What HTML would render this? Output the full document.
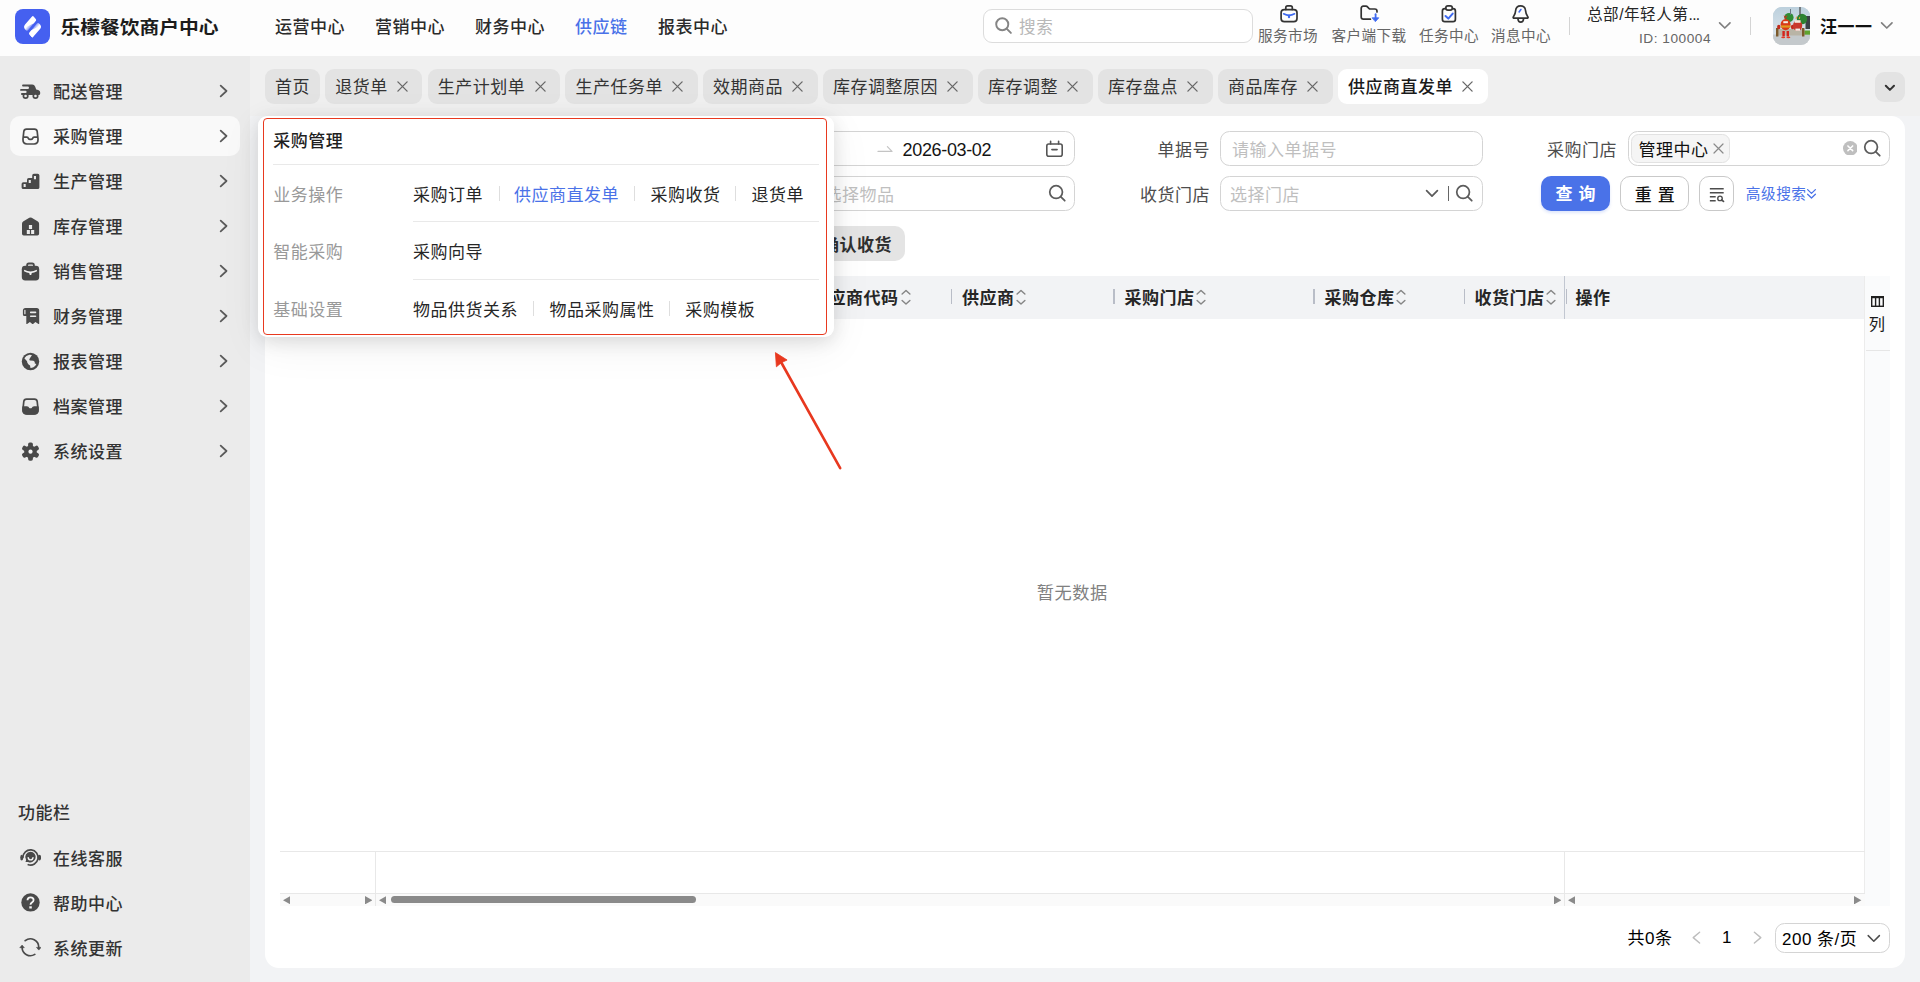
<!DOCTYPE html>
<html lang="zh-CN">
<head>
<meta charset="utf-8">
<title>乐檬餐饮商户中心</title>
<style>
*{box-sizing:border-box;margin:0;padding:0}
html,body{width:1920px;height:982px;overflow:hidden}
body{font-family:"Liberation Sans","Noto Sans CJK SC",sans-serif;font-size:17px;letter-spacing:.5px;color:#333;background:#f2f3f5;position:relative}
.abs{position:absolute}
svg{display:block}
/* header */
#hd{position:absolute;left:0;top:0;width:1920px;height:56px;background:#fdfdfd}
#logo{position:absolute;left:15px;top:8.7px;width:35px;height:35.3px;border-radius:8px;background:#4560f0}
#brand{position:absolute;left:60.4px;top:13px;font-size:19.8px;font-weight:700;color:#1c1c1c;letter-spacing:0;line-height:30px;white-space:nowrap;transform:scaleY(.9);transform-origin:0 50%}
.nav{position:absolute;top:14px;line-height:28px;font-size:17px;letter-spacing:.5px;font-weight:500;color:#2b2b2b;white-space:nowrap}
.nav.on{color:#4a72e8}
#search{position:absolute;left:983px;top:9px;width:270px;height:34px;border:1px solid #dcdcdc;border-radius:9px;background:#fff}
#search span{position:absolute;left:35px;top:4.6px;line-height:26px;font-size:16.6px;letter-spacing:.6px;color:#b8b8b8}
.hi{position:absolute;top:28px;font-size:14.6px;letter-spacing:.4px;line-height:16px;color:#666;white-space:nowrap;text-align:center}
.hico{position:absolute;top:4px}
.vdiv{position:absolute;width:1px;background:#d4d4d4}
#avatar{position:absolute;left:1773px;top:7px;width:37px;height:38px;border-radius:9px;overflow:hidden;background:linear-gradient(180deg,#cfd9de 0%,#c4d1d4 35%,#a9b39a 62%,#b9b8b0 78%,#cfcfcd 100%)}
/* sidebar */
#sb{position:absolute;left:0;top:56px;width:250px;height:926px;background:#ebebeb}
.mi{position:absolute;left:10px;width:230px;height:40px;border-radius:10px}
.mi.on{background:#f9f9f9}
.mi .ic{position:absolute}
.mi .tx{position:absolute;left:43px;top:8px;line-height:28px;font-size:17px;letter-spacing:.5px;font-weight:500;color:#333;white-space:nowrap}
.mi .ch{position:absolute;left:209px;top:13px}
/* tabs */
.tab{position:absolute;top:69.1px;height:34.5px;border-radius:9px;background:#e3e3e3;font-size:17px;letter-spacing:.5px;line-height:38px;color:#333;padding-left:10px;white-space:nowrap}
.tab.on{background:#fff;color:#1a1a1a;font-weight:500}
.tab .x{position:absolute;right:14.4px;top:12.2px}
/* panel */
#panel{position:absolute;left:265px;top:116px;width:1639.5px;height:852px;border-radius:14px;background:#fff}
.inp{position:absolute;height:35px;border:1px solid #d4d4d4;border-radius:9.5px;background:#fff;font-size:17px;letter-spacing:.5px;line-height:37px;color:#bfbfbf;white-space:nowrap}
.lbl{position:absolute;font-size:17px;letter-spacing:.5px;line-height:39px;color:#4d4d4d;white-space:nowrap;text-align:right}
.btn{position:absolute;height:35px;border-radius:10px;font-size:17px;letter-spacing:.5px;line-height:33px;text-align:center;white-space:nowrap}
#th{position:absolute;background:#f2f3f5}
#th b{position:absolute;top:9px;font-size:17px;letter-spacing:.5px;line-height:27px;font-weight:700;color:#262626;white-space:nowrap}
#th i{position:absolute;top:13px;width:1.2px;height:14.6px;background:#b9bdc7}
#th u{position:absolute;top:0;width:1.2px;height:42.5px;background:#c2c7d1}
/* popup */
#pop{position:absolute;left:258px;top:116px;width:576px;height:221px;background:#fff;border-radius:9px;box-shadow:0 4px 18px rgba(0,0,0,.12),0 10px 44px rgba(0,0,0,.06)}
#ann{position:absolute;left:263px;top:118px;width:564.2px;height:217px;border:1.3px solid #e8391f;border-radius:4px}
#pop .t{position:absolute;font-size:17px;letter-spacing:.5px;line-height:24px;white-space:nowrap}
#pop .g{color:#999}
#pop .k{color:#262626}
#pop .hl{position:absolute;height:1px;background:#e9e9e9}
#pop .vl{position:absolute;width:1px;height:14.3px;background:#dedede}
</style>
</head>
<body>
<div id="hd">
<div id="logo"><svg width="35" height="35" viewBox="0 0 35 35"><defs><linearGradient id="lg1" gradientUnits="userSpaceOnUse" x1="11" y1="13" x2="16.4" y2="17.6"><stop offset="0" stop-color="#fff"/><stop offset=".5" stop-color="#fff"/><stop offset="1" stop-color="#fff" stop-opacity=".3"/></linearGradient><linearGradient id="lg2" gradientUnits="userSpaceOnUse" x1="24" y1="22.4" x2="18.6" y2="17.8"><stop offset="0" stop-color="#fff"/><stop offset=".5" stop-color="#fff"/><stop offset="1" stop-color="#fff" stop-opacity=".3"/></linearGradient></defs><path d="M17.04 7.55 Q17.70 6.80 18.38 7.53 L20.82 10.17 Q21.50 10.90 20.87 11.68 L13.51 20.83 Q12.00 22.70 10.51 20.82 L9.97 20.15 Q8.10 17.80 10.07 15.54 Z" fill="url(#lg1)"/><path d="M17.26 7.70 Q17.70 6.80 18.38 7.53 L20.82 10.17 Q21.50 10.90 20.87 11.68 L18.84 14.21 Q18.65 14.44 18.38 14.57 L12.71 17.27 Q12.44 17.40 12.57 17.13 Z" fill="#fff"/><path d="M21.47 14.95 Q23.00 13.10 24.56 14.93 L25.06 15.52 Q27.00 17.80 25.03 20.06 L18.06 28.05 Q17.40 28.80 16.76 28.03 L14.34 25.17 Q13.70 24.40 14.34 23.63 Z" fill="url(#lg2)"/><path d="M17.84 27.90 Q17.40 28.80 16.76 28.03 L14.34 25.17 Q13.70 24.40 14.34 23.63 L16.30 21.24 Q16.49 21.01 16.76 20.89 L22.36 18.36 Q22.64 18.24 22.50 18.51 Z" fill="#fff"/></svg></div>
<div id="brand">乐檬餐饮商户中心</div>
<div class="nav" style="left:275px">运营中心</div>
<div class="nav" style="left:375px">营销中心</div>
<div class="nav" style="left:475px">财务中心</div>
<div class="nav on" style="left:575px">供应链</div>
<div class="nav" style="left:658px">报表中心</div>
<div id="search"><svg class="abs" style="left:10px;top:6.4px" width="19.2" height="19.2" viewBox="0 0 20 20" fill="none" stroke="#858585" stroke-width="2" stroke-linecap="round"><circle cx="8.6" cy="8.6" r="6.3"/><path d="M13.4 13.4 L17.6 17.6"/></svg><span>搜索</span></div>
<svg class="hico" style="left:1278px" width="22" height="20" viewBox="0 0 22 20" fill="none" stroke="#333" stroke-width="1.7" stroke-linejoin="round" stroke-linecap="round"><rect x="3.1" y="5.6" width="15.9" height="12.1" rx="3.2"/><path d="M7.8 5.4 V3.6 Q7.8 1.8 9.6 1.8 H12.5 Q14.3 1.8 14.3 3.6 V5.4"/><path d="M5.6 9.8 Q8.4 11.4 11 11.4 Q13.8 11.4 16.6 9.8" stroke="#3f6af0" stroke-width="1.6"/><path d="M11 11.6 V13.2" stroke="#3f6af0" stroke-width="2.2"/></svg>
<svg class="hico" style="left:1358px" width="23" height="20" viewBox="0 0 23 20" fill="none" stroke="#333" stroke-width="1.7" stroke-linecap="round" stroke-linejoin="round"><path d="M12.4 15.2 H5.4 Q3.2 15.2 3.2 13 V4.4 Q3.2 2.2 5.4 2.2 H8 Q8.9 2.2 9.5 2.9 L10.9 4.4 Q11.5 5 12.4 5 H16.8 Q19 5 19 7.2 V8"/><path d="M17.6 10.2 V15" stroke="#3f6af0" stroke-width="1.8"/><path d="M14.4 13.8 H20.8 L17.6 17.4Z" fill="#3f6af0" stroke="#3f6af0" stroke-width=".8"/></svg>
<svg class="hico" style="left:1439px" width="20" height="20" viewBox="0 0 20 20" fill="none" stroke="#333" stroke-width="1.7" stroke-linecap="round" stroke-linejoin="round"><rect x="3.4" y="4.6" width="13" height="13.1" rx="2.4"/><rect x="6.8" y="1.8" width="6.5" height="4.3" rx="2.1" fill="#fdfdfd"/><path d="M6.5 12 L9.3 14.6 L13.7 9.6" stroke="#3f6af0" stroke-width="2"/></svg>
<svg class="hico" style="left:1511px" width="20" height="20" viewBox="0 0 20 20" fill="none" stroke="#333" stroke-width="1.7" stroke-linecap="round" stroke-linejoin="round"><path d="M9.6 1.8 Q5 1.8 4.6 6.8 Q4.4 10 2.7 12.2 Q1.6 13.7 2.6 14.1 H16.6 Q17.7 13.7 16.5 12.2 Q14.8 10 14.6 6.8 Q14.2 1.8 9.6 1.8Z"/><path d="M6.9 14.8 Q7.2 18.2 9.7 18.2 Q12.3 18.2 12.6 14.8"/><path d="M9.9 5.5 L8.1 7.9" stroke="#3f6af0" stroke-width="1.6"/></svg>
<div class="hi" style="left:1258px;width:60px">服务市场</div>
<div class="hi" style="left:1331px;width:76px">客户端下载</div>
<div class="hi" style="left:1419px;width:60px">任务中心</div>
<div class="hi" style="left:1491px;width:60px">消息中心</div>
<div class="vdiv" style="left:1569px;top:17px;height:18px"></div>
<div class="abs" style="left:1587px;top:3px;font-size:15.6px;line-height:24px;color:#262626;white-space:nowrap">总部/年轻人第<span style="letter-spacing:-.6px">...</span></div>
<div class="abs" style="left:1587px;width:124px;top:30px;font-size:13.7px;line-height:18px;color:#666;text-align:right;white-space:nowrap">ID: 100004</div>
<svg class="abs" style="left:1716px;top:20px" width="17" height="12" viewBox="0 0 17 12" fill="none" stroke="#808080" stroke-width="1.7" stroke-linecap="round" stroke-linejoin="round"><path d="M3.6 2.8 L8.8 8 L14 2.8"/></svg>
<div class="vdiv" style="left:1750px;top:17px;height:18px"></div>
<div id="avatar"><svg width="37" height="38" viewBox="0 0 37 38"><defs><linearGradient id="sky" x1="0" y1="0" x2="0" y2="1"><stop offset="0" stop-color="#bcd0dd"/><stop offset="1" stop-color="#e4eaee"/></linearGradient></defs><rect width="37" height="38" fill="url(#sky)"/><rect x="0" y="27.5" width="37" height="10.5" fill="#c4c9cc"/><rect x="32.5" y="9" width="4.5" height="13" fill="#3b4247"/><rect x="30" y="23.5" width="7" height="4.2" fill="#5fa32e"/><circle cx="16" cy="10.5" r="4.6" fill="#2f8d35"/><circle cx="29" cy="12" r="5.2" fill="#2c8231"/><rect x="26.4" y="0" width="1.2" height="8" fill="#444"/><rect x="17" y="2" width="1" height="6" fill="#6b7780"/><rect x="3" y="22" width="28.5" height="6.5" fill="#b9b4a6"/><rect x="3" y="21" width="2.4" height="8.5" fill="#7b5a2c"/><rect x="29" y="21" width="2.4" height="8.5" fill="#7b5a2c"/><ellipse cx="12.6" cy="17.6" rx="5" ry="5.6" fill="#d83a17"/><rect x="8" y="18.4" width="9.4" height="2.2" fill="#e09a1e"/><rect x="10.3" y="14.2" width="4.6" height="2" fill="#f3efe6"/><path d="M11.2 8.6 L12.4 11.6 L13.8 8.6" stroke="#d8261a" stroke-width="1" fill="none"/><ellipse cx="5.8" cy="20" rx="1.7" ry="2.2" fill="#c22a1c"/><ellipse cx="19.6" cy="20" rx="1.7" ry="2.2" fill="#c22a1c"/><rect x="9.4" y="24" width="2.4" height="5.4" fill="#d4241b"/><rect x="13.6" y="24" width="2.4" height="5.4" fill="#d4241b"/><ellipse cx="10.2" cy="30.3" rx="2" ry="0.9" fill="#e43a22"/><ellipse cx="15.4" cy="30.3" rx="2" ry="0.9" fill="#e43a22"/><ellipse cx="24.6" cy="18.6" rx="4.6" ry="5.4" fill="#c9382c"/><rect x="21.6" y="13.2" width="6" height="2.6" fill="#f1e9dc"/><rect x="22.4" y="21.6" width="4.6" height="2.2" fill="#f3f0ea"/><path d="M23 12 L23.6 9.6 M26.2 12 L26.8 9.8" stroke="#e6a23a" stroke-width="1"/></svg></div>
<div class="abs" style="left:1820px;top:14px;font-size:17px;letter-spacing:.5px;font-weight:700;line-height:28px;color:#111;white-space:nowrap">汪一一</div>
<svg class="abs" style="left:1878px;top:20px" width="17" height="12" viewBox="0 0 17 12" fill="none" stroke="#808080" stroke-width="1.7" stroke-linecap="round" stroke-linejoin="round"><path d="M3.6 2.8 L8.8 8 L14 2.8"/></svg>
</div>
<div id="sb">
<div class="mi" style="top:15px"><svg class="ic" style="left:10px;top:11px" width="21" height="20" viewBox="0 0 21 20"><path fill="#494949" d="M3 2.6 H12.2 Q14.4 2.6 15.2 4.8 L16.2 7.4 L18.2 8 Q20.2 8.7 20.2 10.6 V11.4 Q20.2 12.9 18.6 12.9 H1.9 Q1 12.9 1 12 Q1 11.1 1.9 11.1 H5.6 Q6.6 11.1 6.6 10 Q6.6 8.8 5.6 8.8 H1 Q0.1 8.8 0.1 7.9 Q0.1 7 1 7 H7.8 Q9 7 9 5.7 Q9 4.4 7.8 4.4 H3 Q2.1 4.4 2.1 3.5 Q2.1 2.6 3 2.6Z"/><circle cx="5.6" cy="14" r="2.2" fill="#ebebeb" stroke="#494949" stroke-width="1.7"/><circle cx="15.5" cy="14" r="2.2" fill="#ebebeb" stroke="#494949" stroke-width="1.7"/></svg><span class="tx">配送管理</span><svg class="ch" width="10" height="14" viewBox="0 0 10 14" fill="none" stroke="#5a5a5a" stroke-width="1.8" stroke-linecap="round" stroke-linejoin="round"><path d="M1.7 1.7 L7.5 7 L1.7 12.3"/></svg></div>
<div class="mi on" style="top:60px"><svg class="ic" style="left:10px;top:10px" width="20" height="20" viewBox="-0.5 -0.5 20 20" fill="none" stroke="#494949" stroke-width="1.7" stroke-linejoin="round"><path d="M6 2.6 H14 Q16.4 2.6 16.7 5 L17.5 12.4 V13.6 Q17.5 17.5 13.6 17.5 H6.4 Q2.5 17.5 2.5 13.6 V12.4 L3.3 5 Q3.6 2.6 6 2.6Z"/><path d="M2.6 10.7 H6.4 Q7.6 10.7 7.8 11.8 Q8.1 12.9 9.2 12.9 H10.8 Q11.9 12.9 12.2 11.8 Q12.4 10.7 13.6 10.7 H17.4"/></svg><span class="tx">采购管理</span><svg class="ch" width="10" height="14" viewBox="0 0 10 14" fill="none" stroke="#5a5a5a" stroke-width="1.8" stroke-linecap="round" stroke-linejoin="round"><path d="M1.7 1.7 L7.5 7 L1.7 12.3"/></svg></div>
<div class="mi" style="top:105px"><svg class="ic" style="left:10px;top:10px" width="20" height="20" viewBox="-0.5 -0.5 20 20"><path fill="#494949" fill-rule="evenodd" d="M13.4 2.3 H17.2 Q18.9 2.3 18.9 4 V15.9 Q18.9 17.6 17.2 17.6 H2.8 Q1.1 17.6 1.1 15.9 V12.4 Q1.1 10.7 2.8 10.7 H6.5 V8.3 Q6.5 6.6 8.2 6.6 H11.7 V4 Q11.7 2.3 13.4 2.3Z M3.1 12.6 h2.1 v2.9 h-2.1z M8.2 8.5 h2.1 v3 h-2.1z M13.4 4.4 h2.1 v3.3 h-2.1z"/></svg><span class="tx">生产管理</span><svg class="ch" width="10" height="14" viewBox="0 0 10 14" fill="none" stroke="#5a5a5a" stroke-width="1.8" stroke-linecap="round" stroke-linejoin="round"><path d="M1.7 1.7 L7.5 7 L1.7 12.3"/></svg></div>
<div class="mi" style="top:150px"><svg class="ic" style="left:10px;top:10px" width="20" height="20" viewBox="-0.5 -0.5 20 20"><path fill="#494949" fill-rule="evenodd" d="M10 0.9 Q10.6 0.9 11.2 1.3 L17.4 5 Q18.6 5.8 18.6 7.2 V17.2 Q18.6 19 16.8 19 H3.2 Q1.5 19 1.5 17.2 V7.2 Q1.5 5.8 2.6 5 L8.8 1.3 Q9.4 0.9 10 0.9Z M8.4 8.5 h3.2 v3.9 h-3.2z M6.3 13.6 h3.1 v4 h-3.1z M10.6 13.6 h3.1 v4 h-3.1z"/></svg><span class="tx">库存管理</span><svg class="ch" width="10" height="14" viewBox="0 0 10 14" fill="none" stroke="#5a5a5a" stroke-width="1.8" stroke-linecap="round" stroke-linejoin="round"><path d="M1.7 1.7 L7.5 7 L1.7 12.3"/></svg></div>
<div class="mi" style="top:195px"><svg class="ic" style="left:10px;top:10px" width="20" height="20" viewBox="-0.5 -0.5 20 20"><rect x="1.3" y="4.3" width="17.4" height="14.7" rx="3.4" fill="#494949"/><path d="M6.6 5 V3.7 Q6.6 2 8.3 2 H11.7 Q13.4 2 13.4 3.7 V5" fill="none" stroke="#494949" stroke-width="1.8"/><path fill="#f4f4f4" d="M3.7 8.3 Q7 9.9 10 9.9 Q13 9.9 16.3 8.3 L16.5 9.7 Q13.2 11.3 11.3 11.5 L10.7 13.4 H9.3 L8.7 11.5 Q6.8 11.3 3.5 9.7Z"/></svg><span class="tx">销售管理</span><svg class="ch" width="10" height="14" viewBox="0 0 10 14" fill="none" stroke="#5a5a5a" stroke-width="1.8" stroke-linecap="round" stroke-linejoin="round"><path d="M1.7 1.7 L7.5 7 L1.7 12.3"/></svg></div>
<div class="mi" style="top:240px"><svg class="ic" style="left:10px;top:10px" width="20" height="20" viewBox="-0.5 -0.5 20 20"><path fill="#494949" fill-rule="evenodd" d="M5 1.4 H16.2 Q18.7 1.4 18.7 3.9 V17 Q18.7 17.9 18 17.5 L14.9 15.4 L12.6 17.4 Q12.2 17.7 11.8 17.4 L9.4 15.4 L6.6 17.5 Q5.8 17.9 5.8 17 V9.5 H4 Q2.4 9.5 2.4 7.9 V4 Q2.4 1.4 5 1.4Z M3.8 3.7 Q3.8 3.2 4.4 3.2 Q5 3.2 5 3.7 V7.3 Q5 7.8 4.4 7.8 Q3.8 7.8 3.8 7.3Z M10.2 5.1 H15 Q15.8 5.1 15.8 5.9 Q15.8 6.7 15 6.7 H10.2 Q9.4 6.7 9.4 5.9 Q9.4 5.1 10.2 5.1Z M10.2 9 H15 Q15.8 9 15.8 9.8 Q15.8 10.6 15 10.6 H10.2 Q9.4 10.6 9.4 9.8 Q9.4 9 10.2 9Z"/></svg><span class="tx">财务管理</span><svg class="ch" width="10" height="14" viewBox="0 0 10 14" fill="none" stroke="#5a5a5a" stroke-width="1.8" stroke-linecap="round" stroke-linejoin="round"><path d="M1.7 1.7 L7.5 7 L1.7 12.3"/></svg></div>
<div class="mi" style="top:285px"><svg class="ic" style="left:10px;top:10px" width="20" height="20" viewBox="-0.5 -0.5 20 20"><circle cx="10" cy="10" r="8.7" fill="#494949"/><path fill="#ebebeb" d="M3.86 6.84 Q5.35 3.86 8.88 3.21 Q10.37 3.02 11.49 3.77 L10.37 5.35 L8.79 7.77 Q8.79 8.98 9.63 8.98 L12.79 9.16 Q14.28 9.63 14.28 10.74 V11.95 L15.86 12.60 Q15.21 14.65 12.98 15.77 Q11.49 16.42 10.00 16.42 L9.54 13.91 Q8.14 13.35 7.49 12.32 Q6.47 10.93 6.56 9.81 Z"/></svg><span class="tx">报表管理</span><svg class="ch" width="10" height="14" viewBox="0 0 10 14" fill="none" stroke="#5a5a5a" stroke-width="1.8" stroke-linecap="round" stroke-linejoin="round"><path d="M1.7 1.7 L7.5 7 L1.7 12.3"/></svg></div>
<div class="mi" style="top:330px"><svg class="ic" style="left:10px;top:10px" width="20" height="20" viewBox="-0.5 -0.5 20 20" stroke="#494949" stroke-width="1.7" stroke-linejoin="round"><path fill="none" d="M6 2.6 H14 Q16.4 2.6 16.7 5 L17.5 12.4 V13.6 Q17.5 17.5 13.6 17.5 H6.4 Q2.5 17.5 2.5 13.6 V12.4 L3.3 5 Q3.6 2.6 6 2.6Z"/><path fill="#494949" d="M2.6 10.7 H6.4 Q7.6 10.7 7.8 11.6 Q8.1 12.5 9.2 12.5 H10.8 Q11.9 12.5 12.2 11.6 Q12.4 10.7 13.6 10.7 H17.4 V13.6 Q17.4 17.4 13.6 17.4 H6.4 Q2.6 17.4 2.6 13.6Z"/></svg><span class="tx">档案管理</span><svg class="ch" width="10" height="14" viewBox="0 0 10 14" fill="none" stroke="#5a5a5a" stroke-width="1.8" stroke-linecap="round" stroke-linejoin="round"><path d="M1.7 1.7 L7.5 7 L1.7 12.3"/></svg></div>
<div class="mi" style="top:375px"><svg class="ic" style="left:10px;top:10px" width="20" height="20" viewBox="-0.5 -0.7 20 20" fill="#494949"><circle cx="10" cy="10" r="6.3"/><rect x="7.6" y="0.9" width="4.8" height="6" rx="1.7" transform="rotate(0 10 10)"/><rect x="7.6" y="0.9" width="4.8" height="6" rx="1.7" transform="rotate(60 10 10)"/><rect x="7.6" y="0.9" width="4.8" height="6" rx="1.7" transform="rotate(120 10 10)"/><rect x="7.6" y="0.9" width="4.8" height="6" rx="1.7" transform="rotate(180 10 10)"/><rect x="7.6" y="0.9" width="4.8" height="6" rx="1.7" transform="rotate(240 10 10)"/><rect x="7.6" y="0.9" width="4.8" height="6" rx="1.7" transform="rotate(300 10 10)"/><circle cx="10" cy="10" r="2.1" fill="#f4f4f4"/></svg><span class="tx">系统设置</span><svg class="ch" width="10" height="14" viewBox="0 0 10 14" fill="none" stroke="#5a5a5a" stroke-width="1.8" stroke-linecap="round" stroke-linejoin="round"><path d="M1.7 1.7 L7.5 7 L1.7 12.3"/></svg></div>
<div class="abs" style="left:18px;top:745px;font-size:17px;letter-spacing:.5px;line-height:26px;color:#333;font-weight:500">功能栏</div>
<div class="mi" style="top:782px"><svg class="ic" style="left:9px;top:9px" width="22" height="20" viewBox="-1.5 -0.4 22 20"><path d="M2.4 10 A7.6 7.6 0 1 1 7.8 17.3" fill="none" stroke="#494949" stroke-width="1.7" stroke-linecap="round"/><ellipse cx="1.2" cy="10.2" rx="1.5" ry="2.9" fill="#494949"/><ellipse cx="19" cy="10.2" rx="1.6" ry="2.9" fill="#494949"/><path fill="#494949" d="M10 4.4 A5.3 5.3 0 1 1 7.6 14.5 L5 14.6 L5.6 12.6 A5.3 5.3 0 0 1 10 4.4Z"/><path d="M7.7 10.2 Q8 12.5 10.1 12.5 Q12.2 12.5 12.5 10.2" fill="none" stroke="#f4f4f4" stroke-width="1.4" stroke-linecap="round"/></svg><span class="tx">在线客服</span></div>
<div class="mi" style="top:827px"><svg class="ic" style="left:10px;top:9px" width="20" height="20" viewBox="-0.5 -0.4 20 20"><circle cx="10" cy="10" r="9.2" fill="#494949"/><path d="M7 7.9 Q7 4.9 10 4.9 Q13.1 4.9 13.1 7.6 Q13.1 9 11.4 10.2 Q10 11.2 10 12.4" fill="none" stroke="#f6f6f6" stroke-width="1.8"/><rect x="8.8" y="13.9" width="2.5" height="2.2" fill="#f6f6f6"/></svg><span class="tx">帮助中心</span></div>
<div class="mi" style="top:872px"><svg class="ic" style="left:9px;top:9px" width="22" height="20" viewBox="-1.4 -0.2 22 20"><path d="M4.8 3.5 A8.3 8.3 0 0 1 18.3 10.4" fill="none" stroke="#494949" stroke-width="1.7" stroke-linecap="round"/><path d="M16.1 10.2 H20.7 L18.4 12.9Z" fill="#494949" stroke="#494949" stroke-width=".6" stroke-linejoin="round"/><path d="M14.4 17.2 A8.3 8.3 0 0 1 1.7 10.3" fill="none" stroke="#494949" stroke-width="1.7" stroke-linecap="round"/><path d="M-0.6 10.5 H3.9 L1.7 7.9Z" fill="#494949" stroke="#494949" stroke-width=".6" stroke-linejoin="round"/></svg><span class="tx">系统更新</span></div>
</div>
<div id="tabs">
<div class="abs" style="left:250px;top:56px;width:1670px;height:60px;background:#f0f0f0"></div>
<div class="tab" style="left:265.0px;width:55.0px">首页</div>
<div class="tab" style="left:325.3px;width:97.2px">退货单<svg class="x" width="11" height="11" viewBox="0 0 11 11" fill="none" stroke="#666" stroke-width="1.3" stroke-linecap="round"><path d="M0.9 0.9 L10.1 10.1 M10.1 0.9 L0.9 10.1"/></svg></div>
<div class="tab" style="left:427.8px;width:132.2px">生产计划单<svg class="x" width="11" height="11" viewBox="0 0 11 11" fill="none" stroke="#666" stroke-width="1.3" stroke-linecap="round"><path d="M0.9 0.9 L10.1 10.1 M10.1 0.9 L0.9 10.1"/></svg></div>
<div class="tab" style="left:565.4px;width:132.2px">生产任务单<svg class="x" width="11" height="11" viewBox="0 0 11 11" fill="none" stroke="#666" stroke-width="1.3" stroke-linecap="round"><path d="M0.9 0.9 L10.1 10.1 M10.1 0.9 L0.9 10.1"/></svg></div>
<div class="tab" style="left:702.9px;width:114.7px">效期商品<svg class="x" width="11" height="11" viewBox="0 0 11 11" fill="none" stroke="#666" stroke-width="1.3" stroke-linecap="round"><path d="M0.9 0.9 L10.1 10.1 M10.1 0.9 L0.9 10.1"/></svg></div>
<div class="tab" style="left:823.0px;width:149.7px">库存调整原因<svg class="x" width="11" height="11" viewBox="0 0 11 11" fill="none" stroke="#666" stroke-width="1.3" stroke-linecap="round"><path d="M0.9 0.9 L10.1 10.1 M10.1 0.9 L0.9 10.1"/></svg></div>
<div class="tab" style="left:978.0px;width:114.7px">库存调整<svg class="x" width="11" height="11" viewBox="0 0 11 11" fill="none" stroke="#666" stroke-width="1.3" stroke-linecap="round"><path d="M0.9 0.9 L10.1 10.1 M10.1 0.9 L0.9 10.1"/></svg></div>
<div class="tab" style="left:1098.0px;width:114.7px">库存盘点<svg class="x" width="11" height="11" viewBox="0 0 11 11" fill="none" stroke="#666" stroke-width="1.3" stroke-linecap="round"><path d="M0.9 0.9 L10.1 10.1 M10.1 0.9 L0.9 10.1"/></svg></div>
<div class="tab" style="left:1218.1px;width:114.7px">商品库存<svg class="x" width="11" height="11" viewBox="0 0 11 11" fill="none" stroke="#666" stroke-width="1.3" stroke-linecap="round"><path d="M0.9 0.9 L10.1 10.1 M10.1 0.9 L0.9 10.1"/></svg></div>
<div class="tab on" style="left:1338.1px;width:149.7px">供应商直发单<svg class="x" width="11" height="11" viewBox="0 0 11 11" fill="none" stroke="#666" stroke-width="1.3" stroke-linecap="round"><path d="M0.9 0.9 L10.1 10.1 M10.1 0.9 L0.9 10.1"/></svg></div>
<div class="abs" style="left:1875.2px;top:71.9px;width:30px;height:30.2px;border-radius:9px;background:#e3e3e3"><svg class="abs" style="left:0;top:0" width="30" height="30" viewBox="0 0 30 30" fill="none" stroke="#333" stroke-width="2" stroke-linecap="round" stroke-linejoin="round"><path d="M10.8 13.7 L14.9 17.9 L19 13.7"/></svg></div>
</div>
<div id="panel">
<div class="inp" style="left:435px;top:15px;width:374.5px"><span class="abs" style="left:201.6px;top:0;color:#141414;font-size:18px;letter-spacing:-.35px">2026-03-02</span><svg class="abs" style="left:175.5px;top:12px" width="16" height="10" viewBox="0 0 16 10" fill="none" stroke="#c4c4c4" stroke-width="1.2" stroke-linecap="round" stroke-linejoin="round"><path d="M1 7.4 H15 L10.4 2.6"/></svg><svg class="abs" style="left:344px;top:7.6px" width="19" height="18" viewBox="0 0 19 18" fill="none" stroke="#555" stroke-width="1.6" stroke-linecap="round" stroke-linejoin="round"><rect x="1.8" y="4" width="15.4" height="12.2" rx="2"/><path d="M5.6 1.2 V4 M13.6 1.2 V4 M6.9 9.6 H12.1"/></svg></div>
<div class="lbl" style="left:845px;width:100px;top:15px">单据号</div>
<div class="inp" style="left:955px;top:15px;width:262.5px;padding-left:11px">请输入单据号</div>
<div class="lbl" style="left:1252px;width:100px;top:15px">采购门店</div>
<div class="inp" style="left:1363px;top:15px;width:262px"><span class="abs" style="left:2px;top:2px;height:29px;width:99px;border:1px solid #e2e2e2;border-radius:7.5px;background:#f5f5f5;color:#111;line-height:31px;padding-left:6.6px">管理中心<svg class="abs" style="left:80.6px;top:8.4px" width="11" height="11" viewBox="0 0 11 11" fill="none" stroke="#8a8a8a" stroke-width="1.2" stroke-linecap="round"><path d="M1 1 L10 10 M10 1 L1 10"/></svg></span><svg class="abs" style="left:213.9000000000001px;top:8.699999999999989px" width="14.6" height="14.6" viewBox="0 0 16 16"><circle cx="8" cy="8" r="8" fill="#bfbfbf"/><path d="M5.4 5.4 L10.6 10.6 M10.6 5.4 L5.4 10.6" stroke="#fff" stroke-width="1.7" stroke-linecap="round"/></svg><svg class="abs" style="left:233.6px;top:6.6px" width="18.4" height="18.4" viewBox="0 0 20 20" fill="none" stroke="#5c5c5c" stroke-width="1.9" stroke-linecap="round"><circle cx="8.8" cy="8.8" r="6.9"/><path d="M14 14 L18.2 18.2"/></svg></div>
<div class="inp" style="left:435px;top:60px;width:374.5px;padding-left:123.5px">选择物品<svg class="abs" style="left:346.6px;top:6.6px" width="18.4" height="18.4" viewBox="0 0 20 20" fill="none" stroke="#5c5c5c" stroke-width="1.9" stroke-linecap="round"><circle cx="8.8" cy="8.8" r="6.9"/><path d="M14 14 L18.2 18.2"/></svg></div>
<div class="lbl" style="left:845px;width:100px;top:60px">收货门店</div>
<div class="inp" style="left:955px;top:60px;width:262.5px;padding-left:9px">选择门店<svg class="abs" style="left:203px;top:10px" width="16" height="12" viewBox="0 0 16 12" fill="none" stroke="#5a5a5a" stroke-width="1.7" stroke-linecap="round" stroke-linejoin="round"><path d="M2.6 3.6 L8 9.2 L13.4 3.6"/></svg><span class="abs" style="left:227px;top:9px;width:1px;height:15px;background:#666"></span><svg class="abs" style="left:233.6px;top:6.6px" width="18.4" height="18.4" viewBox="0 0 20 20" fill="none" stroke="#5c5c5c" stroke-width="1.9" stroke-linecap="round"><circle cx="8.8" cy="8.8" r="6.9"/><path d="M14 14 L18.2 18.2"/></svg></div>
<div class="btn" style="left:1276px;top:60px;width:69px;background:#4a72e8;color:#fff;font-weight:700;line-height:38px;box-shadow:0 2px 3px rgba(74,114,232,.18)"><span style="letter-spacing:6px;margin-right:-6px">查询</span></div>
<div class="btn" style="left:1355.3px;top:60px;width:68.7px;background:#fff;border:1px solid #c9c9c9;color:#111;font-weight:500;line-height:37px"><span style="letter-spacing:6px;margin-right:-6px">重置</span></div>
<div class="btn" style="left:1434.2px;top:60px;width:34.8px;background:#fff;border:1px solid #c9c9c9"><svg class="abs" style="left:-1px;top:-1px" width="35" height="35" viewBox="0 0 35 35" fill="none" stroke="#4d4d4d" stroke-width="1.6"><path d="M10.85 12.7 H24.7 M10.85 16.7 H24.7 M10.85 20.7 H16.7 M10.85 24.8 H16.7"/><circle cx="21" cy="22.4" r="2.25" stroke-width="1.4"/><path d="M22.6 24 L24.5 25.4" stroke-width="1.7" stroke-linecap="round"/></svg></div>
<div class="abs" style="left:1480.8px;top:67px;font-size:14.7px;line-height:22px;color:#4a72e8;white-space:nowrap">高级搜索</div><svg class="abs" style="left:1541px;top:72px" width="11" height="12" viewBox="0 0 11 12" fill="none" stroke="#4a72e8" stroke-width="1.3" stroke-linecap="round" stroke-linejoin="round"><path d="M1.6 1.6 L5.5 5.4 L9.4 1.6 M1.6 6.2 L5.5 10 L9.4 6.2"/></svg>
<div class="btn" style="left:525px;top:110.3px;width:114.70000000000005px;height:34.5px;background:#e4e4e4;color:#303030;font-weight:700;line-height:40px;text-align:right;padding-right:12.6px">确认收货</div>
<div id="th" style="left:15px;top:160.3px;width:1584.5px;height:42.5px"><b style="left:548.4px">应商代码</b><svg class="abs" style="left:621.1px;top:13px" width="10" height="18" viewBox="0 0 10 18" fill="none" stroke="#858585" stroke-width="1.4" stroke-linecap="round" stroke-linejoin="round"><path d="M1.1 5 L5 1.4 L8.9 5 M1.1 11.4 L5 15 L8.9 11.4"/></svg><i style="left:670.6px"></i><b style="left:681.9px">供应商</b><svg class="abs" style="left:736.1px;top:13px" width="10" height="18" viewBox="0 0 10 18" fill="none" stroke="#858585" stroke-width="1.4" stroke-linecap="round" stroke-linejoin="round"><path d="M1.1 5 L5 1.4 L8.9 5 M1.1 11.4 L5 15 L8.9 11.4"/></svg><i style="left:833.4px"></i><b style="left:844.4px">采购门店</b><svg class="abs" style="left:915.6px;top:13px" width="10" height="18" viewBox="0 0 10 18" fill="none" stroke="#858585" stroke-width="1.4" stroke-linecap="round" stroke-linejoin="round"><path d="M1.1 5 L5 1.4 L8.9 5 M1.1 11.4 L5 15 L8.9 11.4"/></svg><i style="left:1033.4px"></i><b style="left:1044.4px">采购仓库</b><svg class="abs" style="left:1115.6px;top:13px" width="10" height="18" viewBox="0 0 10 18" fill="none" stroke="#858585" stroke-width="1.4" stroke-linecap="round" stroke-linejoin="round"><path d="M1.1 5 L5 1.4 L8.9 5 M1.1 11.4 L5 15 L8.9 11.4"/></svg><i style="left:1183.7px"></i><b style="left:1194.5px">收货门店</b><svg class="abs" style="left:1265.6px;top:13px" width="10" height="18" viewBox="0 0 10 18" fill="none" stroke="#858585" stroke-width="1.4" stroke-linecap="round" stroke-linejoin="round"><path d="M1.1 5 L5 1.4 L8.9 5 M1.1 11.4 L5 15 L8.9 11.4"/></svg><i style="left:1285.6px"></i><b style="left:1295.6px">操作</b><u style="left:1284px"></u></div>
<div class="abs" style="left:1599px;top:160.3px;width:26px;height:629.3px;background:#fafbfc;border-left:1px solid #ececec"><span class="abs" style="left:1px;top:74px;width:23.5px;height:1px;background:#e6e6e6"></span><svg class="abs" style="left:5.6px;top:19.6px" width="13" height="11" viewBox="0 0 13 11" fill="none" stroke="#1f1f1f" stroke-width="1.4"><rect x="0.7" y="0.7" width="11.6" height="9.6"/><path d="M4.6 0.7 V10.3 M8.4 0.7 V10.3"/><path d="M0 1.1 H13" stroke-width="2.2"/></svg><span class="abs" style="left:3.8px;top:35.5px;font-size:16.3px;line-height:24px;color:#1a1a1a">列</span></div>
<div class="abs" style="left:15px;top:464px;width:1584.5px;text-align:center;font-size:17.2px;line-height:26px;color:#808080">暂无数据</div>
<div class="abs" style="left:15px;top:735px;width:1584.5px;height:1px;background:#e8e8e8"></div>
<div class="abs" style="left:15px;top:777px;width:1584.5px;height:12.6px;background:#fafafa;border-top:1px solid #e8e8e8"></div>
<div class="abs" style="left:110px;top:735px;width:1px;height:54.6px;background:#e8e8e8"></div>
<div class="abs" style="left:1299.2px;top:735px;width:1px;height:54.6px;background:#e8e8e8"></div>
<svg class="abs" style="left:17.8px;top:780px" width="7.4" height="8.4" viewBox="0 0 7.4 8.4" fill="#8a8a8a"><path d="M7.4 0 V8.4 L0 4.2Z"/></svg><svg class="abs" style="left:99.8px;top:780px" width="7.4" height="8.4" viewBox="0 0 7.4 8.4" fill="#8a8a8a"><path d="M0 0 V8.4 L7.4 4.2Z"/></svg><svg class="abs" style="left:114px;top:780px" width="7.4" height="8.4" viewBox="0 0 7.4 8.4" fill="#8a8a8a"><path d="M7.4 0 V8.4 L0 4.2Z"/></svg><svg class="abs" style="left:1288.6px;top:780px" width="7.4" height="8.4" viewBox="0 0 7.4 8.4" fill="#8a8a8a"><path d="M0 0 V8.4 L7.4 4.2Z"/></svg><svg class="abs" style="left:1303px;top:780px" width="7.4" height="8.4" viewBox="0 0 7.4 8.4" fill="#8a8a8a"><path d="M7.4 0 V8.4 L0 4.2Z"/></svg><svg class="abs" style="left:1589.3px;top:780px" width="7.4" height="8.4" viewBox="0 0 7.4 8.4" fill="#8a8a8a"><path d="M0 0 V8.4 L7.4 4.2Z"/></svg>
<div class="abs" style="left:125.5px;top:780.2px;width:305.70000000000005px;height:7.2px;border-radius:4px;background:#8a8a8a"></div>
<div class="abs" style="left:1362.5px;top:809px;font-size:17px;letter-spacing:.5px;line-height:27px;color:#000;white-space:nowrap">共0条</div>
<svg class="abs" style="left:1426px;top:814px" width="11" height="15" viewBox="0 0 11 15" fill="none" stroke="#bdbdbd" stroke-width="1.4" stroke-linecap="round" stroke-linejoin="round"><path d="M8.6 2.2 L2.2 7.6 L8.6 13"/></svg>
<div class="abs" style="left:1452px;top:809px;width:20px;text-align:center;font-size:17px;line-height:26px;color:#000">1</div>
<svg class="abs" style="left:1486.5px;top:814px" width="11" height="15" viewBox="0 0 11 15" fill="none" stroke="#bdbdbd" stroke-width="1.4" stroke-linecap="round" stroke-linejoin="round"><path d="M2.4 2.2 L8.8 7.6 L2.4 13"/></svg>
<div class="inp" style="left:1509.5px;top:807px;width:115.5px;height:30px;line-height:31px;color:#000;padding-left:6.5px">200 条/页<svg class="abs" style="left:90.0px;top:9px" width="16" height="11" viewBox="0 0 16 11" fill="none" stroke="#4d4d4d" stroke-width="1.5" stroke-linecap="round" stroke-linejoin="round"><path d="M2.2 2.6 L7.8 8.2 L13.4 2.6"/></svg></div>
</div>
<div id="pop">
<div class="t k" style="left:15.2px;top:13.5px;font-weight:500;color:#1f1f1f">采购管理</div>
<div class="hl" style="left:15.4px;top:48.3px;width:545.4px"></div>
<div class="t g" style="left:15.2px;top:68.0px">业务操作</div><div class="t k" style="left:155.1px;top:68.0px">采购订单</div><div class="t k" style="left:256.0px;top:68.0px;color:#4a72e8">供应商直发单</div><div class="t k" style="left:392.6px;top:68.0px">采购收货</div><div class="t k" style="left:493.6px;top:68.0px">退货单</div><div class="vl" style="left:240.8px;top:70.3px"></div><div class="vl" style="left:376.4px;top:70.3px"></div><div class="vl" style="left:477.3px;top:70.3px"></div>
<div class="t g" style="left:15.2px;top:125.4px">智能采购</div><div class="t k" style="left:155.1px;top:125.4px">采购向导</div>
<div class="t g" style="left:15.2px;top:183.0px">基础设置</div><div class="t k" style="left:155.1px;top:183.0px">物品供货关系</div><div class="t k" style="left:291.4px;top:183.0px">物品采购属性</div><div class="t k" style="left:427.3px;top:183.0px">采购模板</div><div class="vl" style="left:275.4px;top:185.3px"></div><div class="vl" style="left:411.4px;top:185.3px"></div>
<div class="hl" style="left:155px;top:105px;width:405.8px"></div>
<div class="hl" style="left:155px;top:163px;width:405.8px"></div>
</div>
<div id="ann"></div>
<svg class="abs" style="left:760px;top:340px" width="100" height="140" viewBox="760 340 100 140"><path d="M840.2 468.1 L781 362" stroke="#e8381f" stroke-width="2.6" stroke-linecap="round" fill="none"/><path d="M775.4 352.6 L787.1 360 L781.6 362.6 L776.4 366.8 Z" fill="#e8381f" stroke="#e8381f" stroke-width=".8" stroke-linejoin="round"/></svg>
</body>
</html>
